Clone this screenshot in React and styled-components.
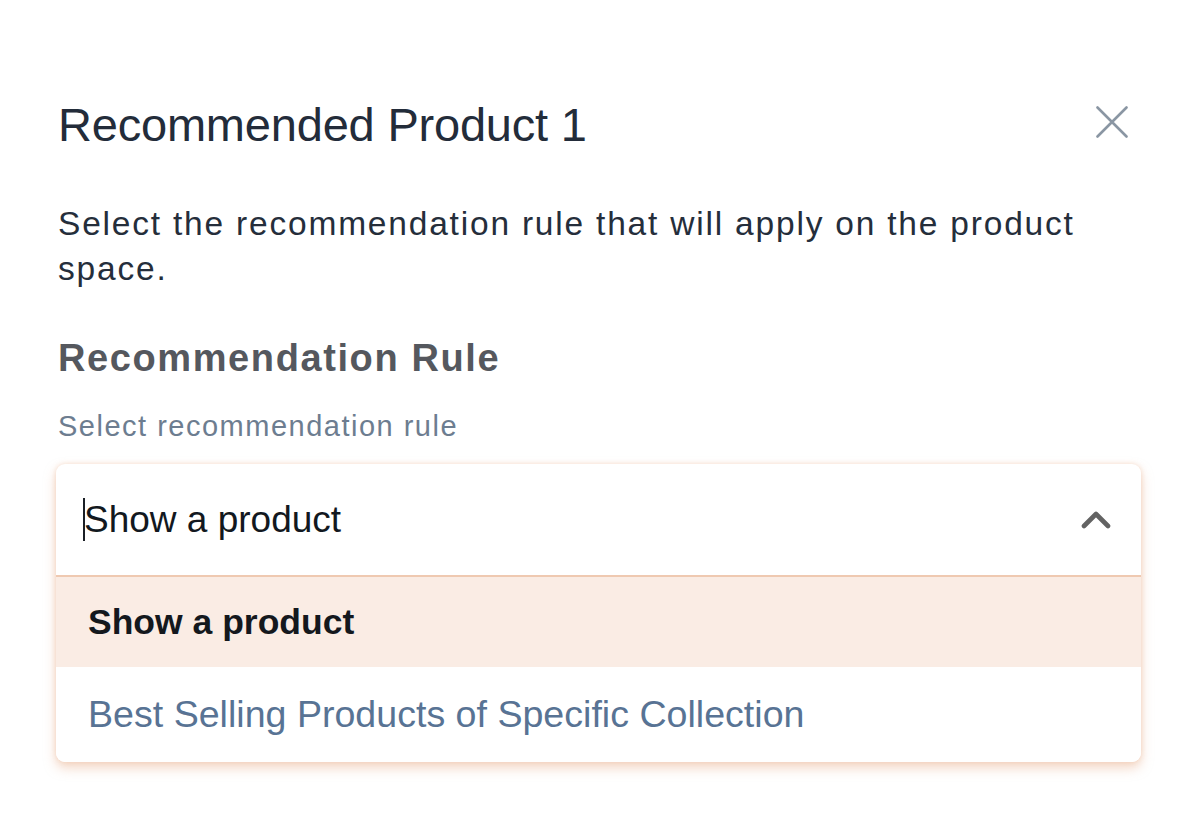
import React from "react";
import styled, { createGlobalStyle } from "styled-components";

const Global = createGlobalStyle`
  html, body { margin: 0; padding: 0; background: #ffffff; }
  body { font-family: "Liberation Sans", Arial, sans-serif; -webkit-font-smoothing: antialiased; }
  * { box-sizing: border-box; }
`;

const Panel = styled.div`
  width: 1204px;
  min-height: 834px;
  padding: 97px 63px 0 58px;
  display: flex;
  flex-direction: column;
`;

const Header = styled.div`
  display: flex;
  align-items: center;
  justify-content: space-between;
  height: 56px;
`;

const Title = styled.h1`
  margin: 0;
  font-size: 47px;
  line-height: 56px;
  font-weight: 400;
  letter-spacing: -0.2px;
  color: #232c3a;
`;

const CloseButton = styled.button`
  width: 32px;
  height: 32px;
  padding: 0;
  margin: 0 13px 6px 0;
  border: none;
  background: transparent;
  display: flex;
  cursor: pointer;
`;

const Description = styled.p`
  margin: 48px 0 0;
  font-size: 33.5px;
  line-height: 45px;
  letter-spacing: 1.8px;
  color: #252e3b;
`;

const SectionTitle = styled.h2`
  margin: 44px 0 0;
  font-size: 38px;
  line-height: 46px;
  font-weight: 700;
  letter-spacing: 1.6px;
  color: #55585e;
`;

const FieldLabel = styled.div`
  margin-top: 27px;
  font-size: 29px;
  line-height: 36px;
  letter-spacing: 1.5px;
  color: #6d7d90;
`;

const Dropdown = styled.div`
  margin: 20px 0 0 -2px;
  border-radius: 9px;
  background: #ffffff;
  overflow: hidden;
  box-shadow: 0 0 5px rgba(240, 196, 168, 0.55), 0 6px 12px rgba(234, 178, 144, 0.5);
`;

const Trigger = styled.div`
  height: 113px;
  display: flex;
  align-items: center;
  justify-content: space-between;
  padding: 0 30px 0 27px;
  border-bottom: 2px solid #efc9b1;
`;

const TriggerValue = styled.div`
  display: flex;
  align-items: center;
  font-size: 37px;
  line-height: 44px;
  color: #121820;
`;

const Caret = styled.span`
  width: 2px;
  height: 43px;
  background: #1a1f26;
  margin-right: -1px;
`;

const Option = styled.div`
  height: ${(p) => p.$h}px;
  display: flex;
  align-items: center;
  padding-left: 32px;
  background: ${(p) => (p.$active ? "#faece4" : "#ffffff")};
  color: ${(p) => (p.$active ? "#14181d" : "#587394")};
  font-size: ${(p) => (p.$active ? "35.5px" : "37.6px")};
  font-weight: ${(p) => (p.$active ? 700 : 400)};
`;

const CloseIcon = () => (
  <svg width="32" height="32" viewBox="0 0 32 32" fill="none">
    <path d="M1.5 1.5L30.5 30.5M30.5 1.5L1.5 30.5" stroke="#8a96a3" strokeWidth="2.6" strokeLinecap="round" />
  </svg>
);

const ChevronUp = () => (
  <svg width="30" height="19" viewBox="0 0 30 19" fill="none">
    <path d="M3 16L15 4L27 16" stroke="#636363" strokeWidth="4.6" strokeLinecap="round" strokeLinejoin="round" />
  </svg>
);

export default function App() {
  return (
    <>
      <Global />
      <Panel>
        <Header>
          <Title>Recommended Product 1</Title>
          <CloseButton aria-label="Close">
            <CloseIcon />
          </CloseButton>
        </Header>
        <Description>
          Select the recommendation rule that will apply on the product space.
        </Description>
        <SectionTitle>Recommendation Rule</SectionTitle>
        <FieldLabel>Select recommendation rule</FieldLabel>
        <Dropdown>
          <Trigger>
            <TriggerValue>
              <Caret />
              Show a product
            </TriggerValue>
            <ChevronUp />
          </Trigger>
          <Option $active $h={90}>Show a product</Option>
          <Option $h={95}>Best Selling Products of Specific Collection</Option>
        </Dropdown>
      </Panel>
    </>
  );
}
